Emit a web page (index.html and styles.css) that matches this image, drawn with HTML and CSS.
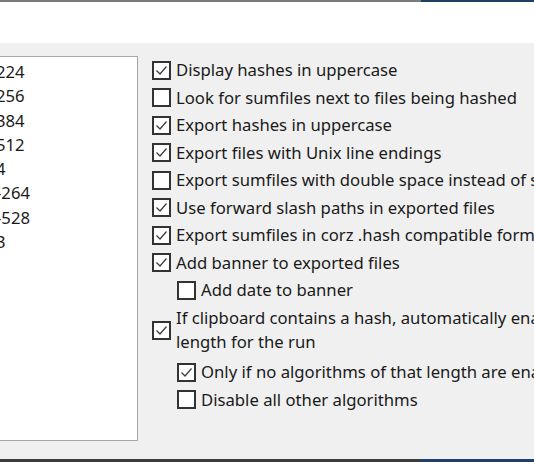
FILE: index.html
```html
<!DOCTYPE html>
<html>
<head>
<meta charset="utf-8">
<link rel="stylesheet" href="styles.css">
</head>
<body>
<div class="topline"><div class="tl-gray"></div><div class="tl-blue"></div></div>
<div class="header"></div>
<div class="main">
  <div class="listbox">
    <div class="item">224</div>
    <div class="item">256</div>
    <div class="item">384</div>
    <div class="item">512</div>
    <div class="item">4</div>
    <div class="item">-264</div>
    <div class="item">-528</div>
    <div class="item">3</div>
  </div>
  <div class="options">
    <div class="opt"><span class="cb on"><svg viewBox="0 0 15 15"><polyline points="2.5,7.5 6,11 12.5,3.5"/></svg></span><span class="lbl">Display hashes in uppercase</span></div>
    <div class="opt"><span class="cb"></span><span class="lbl">Look for sumfiles next to files being hashed</span></div>
    <div class="opt"><span class="cb on"><svg viewBox="0 0 15 15"><polyline points="2.5,7.5 6,11 12.5,3.5"/></svg></span><span class="lbl">Export hashes in uppercase</span></div>
    <div class="opt"><span class="cb on"><svg viewBox="0 0 15 15"><polyline points="2.5,7.5 6,11 12.5,3.5"/></svg></span><span class="lbl">Export files with Unix line endings</span></div>
    <div class="opt"><span class="cb"></span><span class="lbl">Export sumfiles with double space instead of single space</span></div>
    <div class="opt"><span class="cb on"><svg viewBox="0 0 15 15"><polyline points="2.5,7.5 6,11 12.5,3.5"/></svg></span><span class="lbl">Use forward slash paths in exported files</span></div>
    <div class="opt"><span class="cb on"><svg viewBox="0 0 15 15"><polyline points="2.5,7.5 6,11 12.5,3.5"/></svg></span><span class="lbl">Export sumfiles in corz .hash compatible format</span></div>
    <div class="opt"><span class="cb on"><svg viewBox="0 0 15 15"><polyline points="2.5,7.5 6,11 12.5,3.5"/></svg></span><span class="lbl">Add banner to exported files</span></div>
    <div class="opt sub"><span class="cb"></span><span class="lbl">Add date to banner</span></div>
    <div class="opt multi"><span class="cb on"><svg viewBox="0 0 15 15"><polyline points="2.5,7.5 6,11 12.5,3.5"/></svg></span><span class="lbl">If clipboard contains a hash, automatically enable algorithms of that<br>length for the run</span></div>
    <div class="opt sub first"><span class="cb on"><svg viewBox="0 0 15 15"><polyline points="2.5,7.5 6,11 12.5,3.5"/></svg></span><span class="lbl">Only if no algorithms of that length are enabled</span></div>
    <div class="opt sub"><span class="cb"></span><span class="lbl">Disable all other algorithms</span></div>
  </div>
</div>
<div class="bottomline"><div class="bl-gray"></div><div class="bl-blue"></div></div>
</body>
</html>
```
FILE: styles.css
```css
html, body {
  margin: 0;
  padding: 0;
  width: 534px;
  height: 462px;
  overflow: hidden;
  background: #f0f0f0;
  font-family: "Noto Sans", "Open Sans", sans-serif;
  font-size: 16.7px;
  color: #1a1a1a;
}
.topline {
  display: flex;
  height: 2px;
}
.tl-gray { width: 421px; background: #7b7b7b; }
.tl-blue { flex: 1; background: #1f3f66; }
.header {
  height: 41px;
  background: #ffffff;
}
.main {
  height: 416px;
  display: flex;
  align-items: flex-start;
  background: #f0f0f0;
  overflow: hidden;
}
.listbox {
  flex: none;
  margin-top: 13px;
  margin-left: -20px;
  width: 158px;
  height: 385px;
  background: #ffffff;
  border: 1px solid #a8a8a8;
  box-sizing: border-box;
  padding: 3px 0 0 15px;
}
.item {
  height: 24.3px;
  line-height: 24px;
  white-space: nowrap;
}
.options {
  flex: none;
  margin-left: 14px;
  margin-top: 15px;
  display: flex;
  flex-direction: column;
  gap: 3.5px;
  white-space: nowrap;
}
.opt {
  display: flex;
  align-items: center;
  min-height: 24px;
  line-height: 24px;
}
.opt.sub { margin-left: 25px; }
.opt.multi { margin-top: 0.5px; }
.opt.first { margin-top: 2.5px; }
.cb {
  width: 19px;
  height: 19px;
  box-sizing: border-box;
  border: 2px solid #333333;
  background: #ffffff;
  flex: none;
  margin-right: 5px;
  display: flex;
  align-items: center;
  justify-content: center;
}
.cb svg {
  width: 15px;
  height: 15px;
}
.cb svg polyline {
  fill: none;
  stroke: #3a3a3a;
  stroke-width: 1.2;
}
.lbl { display: block; }
.bottomline {
  display: flex;
  height: 3px;
}
.bl-gray { width: 420px; background: #3c3c3c; }
.bl-blue { flex: 1; background: #1f3f66; }
```
